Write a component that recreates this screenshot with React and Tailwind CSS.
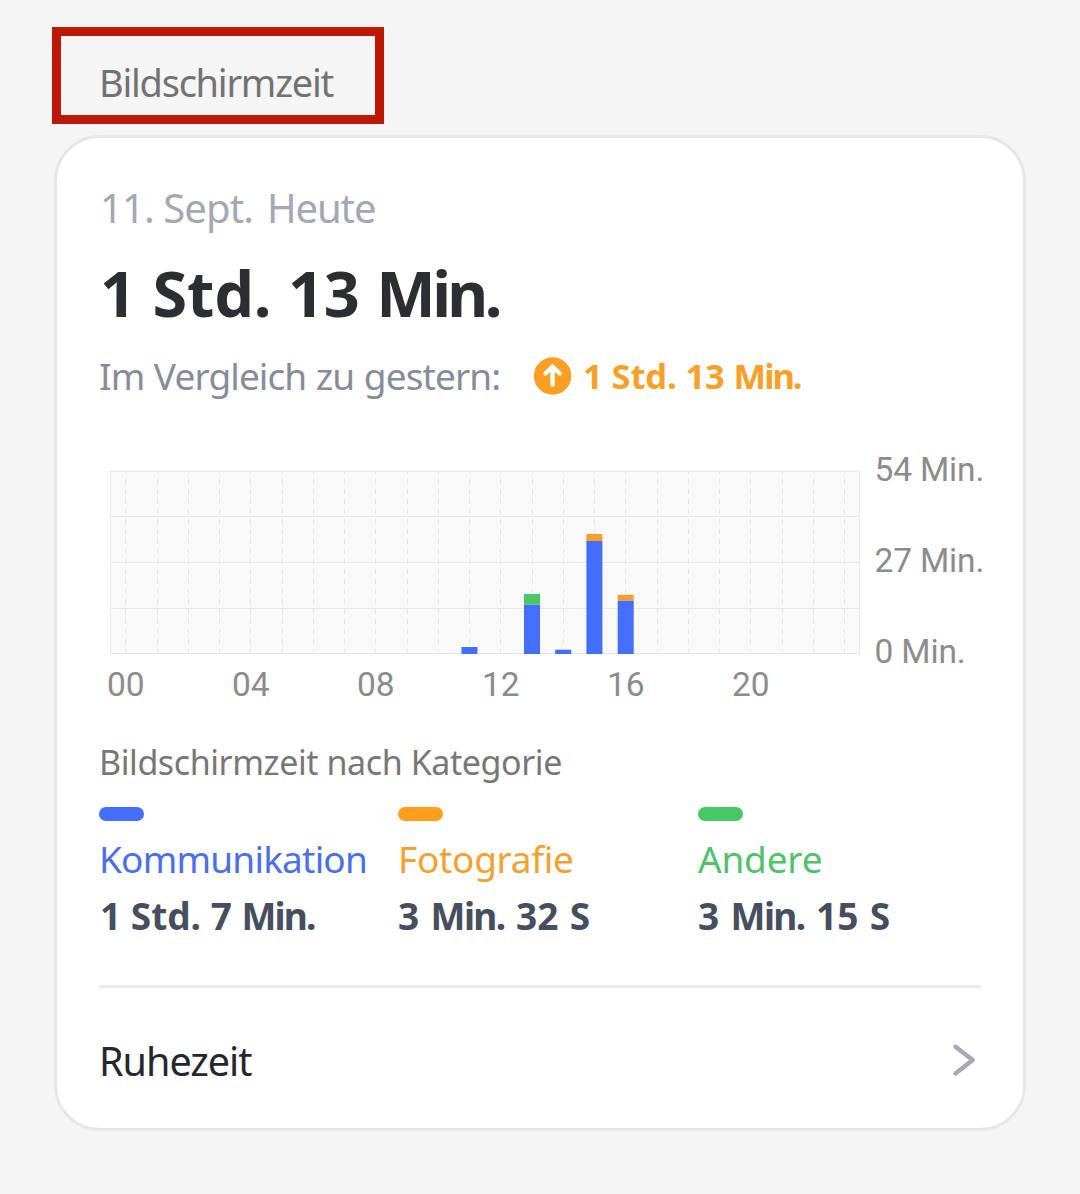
const hours = Array.from({ length: 24 }, (_, i) => i);

const bars = [
  { x: 461.5, parts: [{ y: 647, h: 7, fill: "#446efd" }] },
  {
    x: 524,
    parts: [
      { y: 604.5, h: 49.5, fill: "#446efd" },
      { y: 594, h: 10.5, fill: "#47c864" },
    ],
  },
  { x: 555.2, parts: [{ y: 649.7, h: 4.3, fill: "#446efd" }] },
  {
    x: 586.4,
    parts: [
      { y: 541, h: 113, fill: "#446efd" },
      { y: 534, h: 7, fill: "#f6a02c" },
    ],
  },
  {
    x: 617.7,
    parts: [
      { y: 600.5, h: 53.5, fill: "#446efd" },
      { y: 594.8, h: 5.7, fill: "#f6a02c" },
    ],
  },
];

function Chart() {
  return (
    <svg
      className="block shrink-0"
      width="750"
      height="183"
      viewBox="110 471 750 183"
    >
      <rect x="110" y="471" width="750" height="183" fill="#f9f9f9" />
      {/* Hour lines */}
      {hours.map((h) => (
        <line
          key={h}
          x1={Math.round(125.3 + h * 31.25) + 0.5}
          x2={Math.round(125.3 + h * 31.25) + 0.5}
          y1="469"
          y2="654"
          stroke="#e4e4e6"
          strokeDasharray="5 5"
        />
      ))}
      {[516.5, 562.5, 608.5].map((y) => (
        <line key={y} x1="110" x2="860" y1={y} y2={y} stroke="#e6e8ea" />
      ))}
      <rect
        x="110.5"
        y="471.5"
        width="749"
        height="182"
        fill="none"
        stroke="#e6e8ea"
      />
      {bars.map((bar) =>
        bar.parts.map((p) => (
          <rect
            key={`${bar.x}-${p.y}`}
            x={bar.x}
            y={p.y}
            width="16"
            height={p.h}
            fill={p.fill}
          />
        ))
      )}
    </svg>
  );
}

function Category({ pill, color, name, value, nameClass, valueClass }) {
  return (
    <div className="whitespace-nowrap">
      <div className={`w-[45px] h-3.5 rounded-full ${pill}`} />
      <p className={`mt-3.5 text-[37px] leading-[48px] ${color} ${nameClass}`}>
        {name}
      </p>
      <p
        className={`mt-[9px] text-[37px] leading-[48px] font-bold text-[#464e60] ${valueClass}`}
      >
        {value}
      </p>
    </div>
  );
}

export default function App() {
  return (
    <div className="w-[1080px] h-[1194px] overflow-hidden bg-[#f5f5f5] pt-[27px] font-['Noto_Sans',sans-serif] whitespace-nowrap">
      {/* Section title */}
      <div className="ml-[52px] w-[332px] h-[97px] border-[9px] border-[#bd1706] pl-[38px] pt-[22px]">
        <h2 className="text-[38px] leading-[48px] tracking-[-1.25px] text-[#727272]">
          Bildschirmzeit
        </h2>
      </div>

      <div className="mt-[11px] ml-[54px] w-[972px] h-[996px] rounded-[46px] border-[3px] border-[#e7e7e7] bg-white pl-[42px]">
        <p className="mt-[46px] ml-px text-[40px] leading-[48px] text-[#a5a8b2] flex">
          <span className="w-[167px] tracking-[-0.9px]">11. Sept.</span>
          <span className="tracking-[-1.1px]">Heute</span>
        </p>
        <h1 className="mt-[21px] ml-px text-[63px] leading-[80px] font-bold tracking-[-0.2px] [word-spacing:0.5px] text-[#2d2e32]">
          1 Std. 13 <span className="tracking-[-3.6px]">Min.</span>
        </h1>
        <div className="mt-[19px] h-12 flex items-center">
          <p className="w-[435px] text-[37px] leading-[48px] tracking-[-0.9px] [word-spacing:0.8px] text-[#878c99]">
            Im Vergleich zu gestern:
          </p>
          <svg width="38" height="38" viewBox="0 0 38 38" className="shrink-0">
            <circle cx="18.6" cy="19" r="18.7" fill="#fc9f22" />
            <path
              d="M18.6 27.5V10M11.5 16.5L18.6 9.6l7.1 6.9"
              fill="none"
              stroke="#fff"
              strokeWidth="4.4"
              strokeLinecap="round"
              strokeLinejoin="round"
            />
          </svg>
          <p className="ml-[11px] text-[34.5px] leading-[48px] font-bold tracking-[-0.1px] text-[#fa9f27]">
            1 Std. 13 <span className="tracking-[-2px]">Min.</span>
          </p>
        </div>

        {/* Usage per hour */}
        <div className="mt-[71px] ml-[11px] flex font-[Roboto,sans-serif] text-[#8c8c8c] text-[33.5px]">
          <Chart />
          <div className="-mt-[21px] ml-[14.5px] flex flex-col gap-[51px] leading-10 tracking-[-0.15px]">
            <span>54 Min.</span>
            <span>27 Min.</span>
            <span>0 Min.</span>
          </div>
        </div>
        <div className="-mt-[7px] ml-[8px] flex font-[Roboto,sans-serif] text-[#8c8c8c] text-[33.5px] leading-10">
          {["00", "04", "08", "12", "16", "20"].map((h) => (
            <span key={h} className="w-[125px]">
              {h}
            </span>
          ))}
        </div>

        <h3 className="mt-[33px] text-[34px] leading-[48px] tracking-[-0.42px] text-[#777777]">
          Bildschirmzeit nach Kategorie
        </h3>
        <div className="mt-[21px] grid grid-cols-[299px_300px_1fr]">
          <Category
            pill="bg-[#446efd]"
            color="text-[#4a70e8]"
            name="Kommunikation"
            nameClass="tracking-[-0.8px]"
            value={
              <>
                1 Std. 7 <span className="tracking-[-1.8px]">Min.</span>
              </>
            }
            valueClass="ml-px"
          />
          <Category
            pill="bg-[#ff9f1c]"
            color="text-[#f6a02f]"
            name="Fotografie"
            nameClass="tracking-[-0.3px]"
            value={
              <>
                3 <span className="tracking-[-1.6px]">Min.</span> 32 S
              </>
            }
            valueClass="[word-spacing:1.8px]"
          />
          <Category
            pill="bg-[#47c864]"
            color="text-[#4fc26a]"
            name="Andere"
            nameClass="tracking-[-0.2px]"
            value={
              <>
                3 <span className="tracking-[-1.6px]">Min.</span> 15 S
              </>
            }
            valueClass="[word-spacing:1.8px]"
          />
        </div>

        <div className="mt-[45px] w-[882px] h-[3px] bg-[#ebebeb]" />
        <div className="mt-[49px] w-[882px] flex items-center justify-between">
          <p className="text-[39.5px] leading-[48px] tracking-[-1px] text-[#26272c]">
            Ruhezeit
          </p>
          <svg width="30" height="36" viewBox="0 0 30 36">
            <path
              d="M4.5 3.7L21.7 17L4.5 30.5"
              fill="none"
              stroke="#a7a9b3"
              strokeWidth="4.4"
              strokeLinecap="round"
              strokeLinejoin="round"
            />
          </svg>
        </div>
      </div>
    </div>
  );
}
